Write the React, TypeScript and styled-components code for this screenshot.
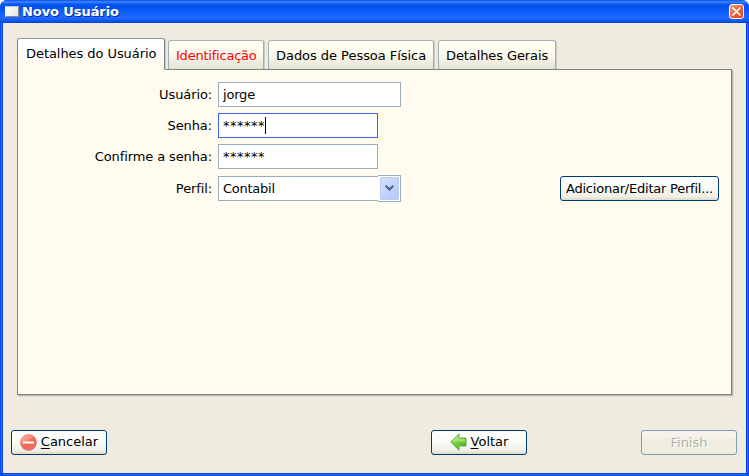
import React from "react";
import styled, { createGlobalStyle } from "styled-components";

const GlobalStyle = createGlobalStyle`
  * { box-sizing: border-box; }
  body { margin: 0; background: #fff; }
  button, input { font: inherit; color: inherit; letter-spacing: inherit; }
`;

const Window = styled.div`
  width: 749px;
  height: 476px;
  display: flex;
  flex-direction: column;
  overflow: hidden;
  border-radius: 7px 7px 0 0;
  background: #0a4bee;
  font: 13px/17px "DejaVu Sans", sans-serif;
  color: #000;
`;

const TitleBar = styled.header`
  height: 23px;
  flex: none;
  display: flex;
  align-items: center;
  padding: 1px 5px 0;
  background: linear-gradient(#0645d6 0, #2a6fff 1px, #3f86ff 2px, #0657ee 4px, #0550ef 7px, #1462ff 13px, #2068ff 18px, #0c55f0 21px, #0242d5 23px);
`;

const WindowIcon = styled.span`
  width: 14px;
  height: 11px;
  margin: 0 3px 2px 0;
  border: 1px solid #8c8c8c;
  border-top: 1px solid #b9c7e8;
  border-left-color: #fff;
  background: linear-gradient(120deg, #fff, #e5e5e5);
`;

const Title = styled.h1`
  margin: -1px 0 0;
  flex: 1;
  font: bold 13px/17px "DejaVu Sans", sans-serif;
  letter-spacing: -0.08px;
  color: #fff;
  text-shadow: 1px 1px 0 #07309a;
`;

const CloseButton = styled.button`
  width: 15px;
  height: 15px;
  margin-top: -1px;
  padding: 0;
  border: 1px solid #fff;
  border-radius: 3px;
  background: linear-gradient(135deg, #f3a083, #ee6038 50%, #e04312);
  svg { display: block; }
`;

const Body = styled.main`
  flex: 1;
  margin: 0 3px 3px;
  padding: 15px 14px 0;
  background: #efebdf;
  box-shadow: -1px 0 #0840d8, 1px 0 #0840d8, 0 1px #0840d8, -2px 0 #2871ff, 2px 0 #2871ff, 0 2px #2871ff;
`;

const TabBar = styled.nav`
  height: 31px;
  display: flex;
  align-items: flex-end;
  gap: 4px;
`;

const Tab = styled.button<{ $width: number; $spacing: number; $active?: boolean; $alert?: boolean }>`
  width: ${p => p.$width}px;
  height: ${p => (p.$active ? 32 : 29)}px;
  flex: none;
  position: relative;
  z-index: ${p => (p.$active ? 1 : 0)};
  margin-right: ${p => (p.$active ? -1 : 0)}px;
  margin-bottom: ${p => (p.$active ? -1 : 0)}px;
  padding: ${p => (p.$active ? "0 0 2px 8px" : "1px 0 0 7px")};
  border: 1px solid ${p => (p.$active ? "#728589" : "#9eadb8")};
  border-top-color: ${p => (p.$active ? "#889aa0" : "#a5b0b8")};
  border-bottom: 0;
  border-radius: 3px 3px 0 0;
  background: ${p => (p.$active
    ? "linear-gradient(#fff 0, #fff 13px, #fffbef 24px)"
    : "linear-gradient(#fffff3 0, #fdfcef 12px, #e5e2d3 28px)")};
  box-shadow: 1px 0 #ccc9be;
  color: ${p => (p.$alert ? "#f00" : "#000")};
  letter-spacing: ${p => p.$spacing}px;
  text-align: left;
  white-space: nowrap;
`;

const Panel = styled.section`
  width: 715px;
  height: 326px;
  padding: 12px 12px 0 0;
  border: 1px solid #768685;
  background: #fffbef;
  box-shadow: 1px 1px #bbb9ae, 2px 2px #dedacd;
`;

const Row = styled.div<{ $gap?: number }>`
  height: 25px;
  display: flex;
  align-items: center;
  margin-bottom: ${p => p.$gap ?? 6}px;
`;

const Label = styled.label`
  width: 194px;
  flex: none;
  margin-right: 6px;
  text-align: right;
  letter-spacing: -0.11px;
  white-space: nowrap;
`;

const Field = styled.input<{ $width: number }>`
  width: ${p => p.$width}px;
  height: 25px;
  padding: 0 4px;
  border: 1px solid #9bacc0;
  border-radius: 0;
  outline: 0;
  background: #fff;
  letter-spacing: -0.2px;
`;

const Password = styled.div<{ $focused?: boolean }>`
  width: 160px;
  height: 25px;
  display: flex;
  align-items: center;
  padding-left: 4px;
  border: 1px solid ${p => (p.$focused ? "#3b62f0" : "#9bacc0")};
  background: #fff;
`;

const Mask = styled.span`
  width: 42px;
  letter-spacing: 0.5px;
`;

const Caret = styled.span`
  width: 1px;
  height: 17px;
  background: #000;
`;

const Combo = styled.div`
  display: flex;
  align-items: center;
`;

const ComboValue = styled.span`
  width: 160px;
  height: 25px;
  padding: 3px 4px;
  border: 1px solid #9bacc0;
  border-right: 0;
  background: #fff;
  letter-spacing: -0.25px;
`;

const ComboArrow = styled.button`
  width: 23px;
  height: 27px;
  padding: 1px;
  border: 1px solid #9bacc0;
  border-left: 0;
  background: #fff;
`;

const ArrowFace = styled.span`
  display: flex;
  align-items: center;
  justify-content: center;
  width: 19px;
  height: 23px;
  padding-bottom: 2px;
  margin-left: 1px;
  border-radius: 2px;
  background: linear-gradient(135deg, #d8e3ff, #c1d1fc 55%, #b2c8f8);
  box-shadow: inset 0 0 0 1px #bacbf3;
`;

const PushButton = styled.button<{ $width: number }>`
  width: ${p => p.$width}px;
  height: 25px;
  flex: none;
  display: flex;
  align-items: center;
  justify-content: center;
  gap: 4px;
  padding: 0 0 1px;
  border: 1px solid #003c74;
  border-radius: 3px;
  background: linear-gradient(#fff, #fafaf7 45%, #f0f0e8 85%, #dcd7cb);
  white-space: nowrap;
  span { position: relative; top: -1px; }
  u { text-underline-offset: 2px; }
  &:disabled {
    color: #b1b1ad;
    border-color: #7f9db9;
    background: linear-gradient(#f5f3ee, #f4f1eb 32%, #f0eee0 34%, #eeefdf 85%, #f3e7d6);
    text-shadow: 1px 1px #fff;
  }
`;

const ProfileButton = styled(PushButton)`
  margin-left: auto;
  letter-spacing: -0.22px;
`;

const Footer = styled.footer`
  display: grid;
  grid-template-columns: 96px 96px 96px;
  column-gap: 324px;
  margin: 35px -6px 0;
  > :last-child { margin-left: -210px; }
`;

const CancelIcon = () => (
  <svg width="17" height="17" viewBox="0 0 17 17">
    <defs>
      <linearGradient id="red" x2="1" y2="1">
        <stop stopColor="#ffab93" /><stop offset=".48" stopColor="#f26b58" /><stop offset="1" stopColor="#ef705d" />
      </linearGradient>
    </defs>
    <circle cx="8.5" cy="8.5" r="8" fill="url(#red)" stroke="#d47a71" strokeWidth=".7" />
    <path d="M1.3 9Q9 8 13.8 2.7A7.5 7.5 0 0 0 1.3 9" fill="#ffad98" opacity=".45" />
    <path d="M3 7.5h11v2H3z" fill="#fff" />
  </svg>
);

const BackIcon = () => (
  <svg width="17" height="18" viewBox="0 0 17 18">
    <defs>
      <linearGradient id="green" x2=".7" y2="1">
        <stop stopColor="#b6e77a" /><stop offset=".5" stopColor="#78d53b" /><stop offset="1" stopColor="#43b719" />
      </linearGradient>
    </defs>
    <path d="M.8 9 9 .8V5h7v8H9v4.2Z" fill="url(#green)" stroke="#5c9953" strokeWidth=".8" />
    <path d="M2 9 8.4 2.5V6H15v3Q7 8 2 9" fill="#c8f195" opacity=".5" />
  </svg>
);

export default function App() {
  return (
    <>
      <GlobalStyle />
      <Window>
        <TitleBar>
          <WindowIcon />
          <Title>Novo Usuário</Title>
          <CloseButton aria-label="Fechar">
            <svg width="13" height="13" viewBox="0 0 13 13"><path d="m2.5 2.5 8 8m0-8-8 8" stroke="#fff" strokeWidth="1.7" /></svg>
          </CloseButton>
        </TitleBar>
        <Body>
          <TabBar>
            <Tab $width={148} $spacing={-0.06} $active>Detalhes do Usuário</Tab>
            <Tab $width={96} $spacing={-0.22} $alert>Identificação</Tab>
            <Tab $width={166} $spacing={-0.04}>Dados de Pessoa Física</Tab>
            <Tab $width={118} $spacing={-0.1}>Detalhes Gerais</Tab>
          </TabBar>
          <Panel>
            <Row><Label>Usuário:</Label><Field $width={183} defaultValue="jorge" /></Row>
            <Row><Label>Senha:</Label><Password $focused><Mask>******</Mask><Caret /></Password></Row>
            <Row $gap={7}><Label>Confirme a senha:</Label><Password><Mask>******</Mask></Password></Row>
            <Row>
              <Label>Perfil:</Label>
              <Combo>
                <ComboValue>Contabil</ComboValue>
                <ComboArrow aria-label="Abrir">
                  <ArrowFace>
                    <svg width="9" height="6" viewBox="0 0 9 6"><path d="m.7.7 3.8 3.8L8.3.7" fill="none" stroke="#4d6185" strokeWidth="2" /></svg>
                  </ArrowFace>
                </ComboArrow>
              </Combo>
              <ProfileButton $width={159}>Adicionar/Editar Perfil...</ProfileButton>
            </Row>
          </Panel>
          <Footer>
            <PushButton $width={96}><CancelIcon /><span><u>C</u>ancelar</span></PushButton>
            <PushButton $width={96}><BackIcon /><span><u>V</u>oltar</span></PushButton>
            <PushButton $width={96} disabled>Finish</PushButton>
          </Footer>
        </Body>
      </Window>
    </>
  );
}
